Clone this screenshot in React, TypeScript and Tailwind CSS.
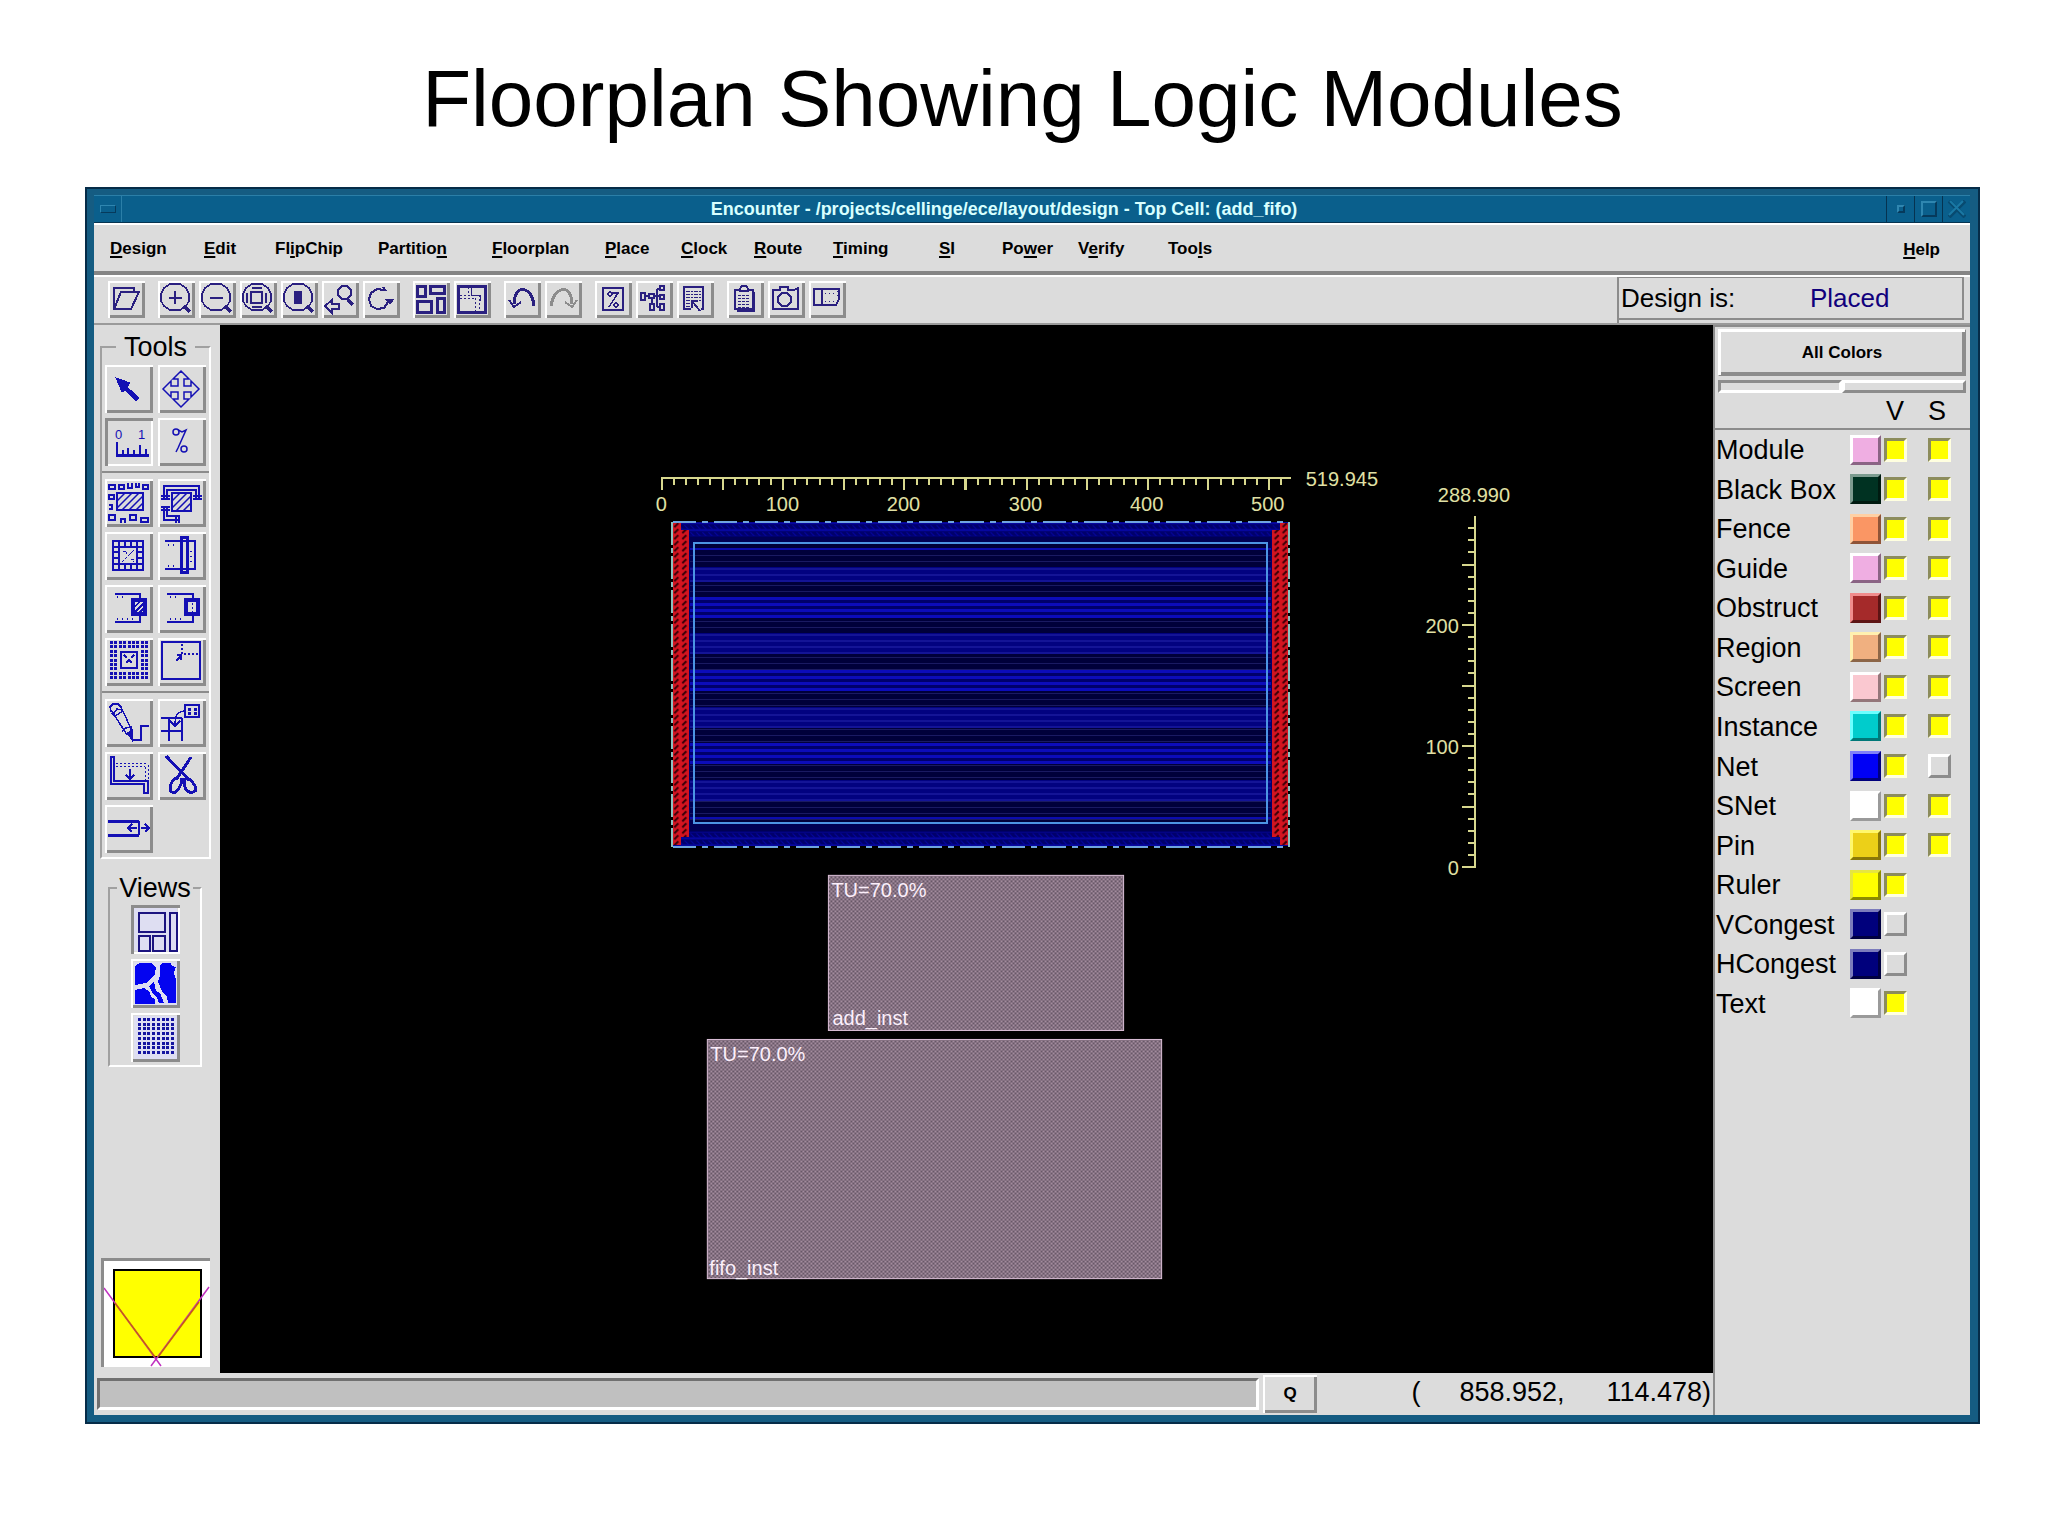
import { useState } from "react";
import type { ReactNode } from "react";

const raised =
  "bg-[#dcdcdc] shadow-[inset_2px_2px_0_#fff,inset_-3px_-3px_0_#8c8c8c]";
const sunken =
  "bg-[#dcdcdc] shadow-[inset_3px_3px_0_#8c8c8c,inset_-2px_-2px_0_#fff]";

const menus = [
  { before: "", key: "D", after: "esign", width: "w-[94px]" },
  { before: "", key: "E", after: "dit", width: "w-[71px]" },
  { before: "Fl", key: "i", after: "pChip", width: "w-[103px]" },
  { before: "Partitio", key: "n", after: "", width: "w-[114px]" },
  { before: "", key: "F", after: "loorplan", width: "w-[113px]" },
  { before: "", key: "P", after: "lace", width: "w-[76px]" },
  { before: "", key: "C", after: "lock", width: "w-[73px]" },
  { before: "", key: "R", after: "oute", width: "w-[79px]" },
  { before: "", key: "T", after: "iming", width: "w-[106px]" },
  { before: "", key: "S", after: "I", width: "w-[63px]" },
  { before: "Po", key: "w", after: "er", width: "w-[76px]" },
  { before: "V", key: "e", after: "rify", width: "w-[90px]" },
  { before: "Too", key: "l", after: "s", width: "w-[60px]" },
];

const layers = [
  { name: "Module", color: "bg-[#efaee2] border-t-[#fff] border-l-[#fff] border-r-[#8a6484] border-b-[#8a6484]", v: true, s: true },
  { name: "Black Box", color: "bg-[#003222] border-t-[#7d9c90] border-l-[#7d9c90] border-r-[#001a10] border-b-[#001a10]", v: true, s: true },
  { name: "Fence", color: "bg-[#fa9664] border-t-[#ffd0a4] border-l-[#ffd0a4] border-r-[#8f5438] border-b-[#8f5438]", v: true, s: true },
  { name: "Guide", color: "bg-[#efaee2] border-t-[#fff] border-l-[#fff] border-r-[#8a6484] border-b-[#8a6484]", v: true, s: true },
  { name: "Obstruct", color: "bg-[#a52a2a] border-t-[#f08c8c] border-l-[#f08c8c] border-r-[#5c1414] border-b-[#5c1414]", v: true, s: true },
  { name: "Region", color: "bg-[#f0b080] border-t-[#fff0b0] border-l-[#fff0b0] border-r-[#8c6648] border-b-[#8c6648]", v: true, s: true },
  { name: "Screen", color: "bg-[#fac8d0] border-t-[#fff] border-l-[#fff] border-r-[#94767a] border-b-[#94767a]", v: true, s: true },
  { name: "Instance", color: "bg-[#00cccc] border-t-[#6cffff] border-l-[#6cffff] border-r-[#007878] border-b-[#007878]", v: true, s: true },
  { name: "Net", color: "bg-[#0000f5] border-t-[#8080f8] border-l-[#8080f8] border-r-[#00007c] border-b-[#00007c]", v: true, s: false },
  { name: "SNet", color: "bg-[#fff] border-t-[#fff] border-l-[#fff] border-r-[#9a9a9a] border-b-[#9a9a9a]", v: true, s: true },
  { name: "Pin", color: "bg-[#ecd018] border-t-[#fff86c] border-l-[#fff86c] border-r-[#8a7808] border-b-[#8a7808]", v: true, s: true },
  { name: "Ruler", color: "bg-[#ffff00] border-t-[#e6e640] border-l-[#e6e640] border-r-[#8c8c00] border-b-[#8c8c00]", v: true, s: null },
  { name: "VCongest", color: "bg-[#00007c] border-t-[#7c7cbc] border-l-[#7c7cbc] border-r-[#000040] border-b-[#000040]", v: false, s: null },
  { name: "HCongest", color: "bg-[#00007c] border-t-[#7c7cbc] border-l-[#7c7cbc] border-r-[#000040] border-b-[#000040]", v: false, s: null },
  { name: "Text", color: "bg-[#fff] border-t-[#fff] border-l-[#fff] border-r-[#9a9a9a] border-b-[#9a9a9a]", v: true, s: null },
];

const range = (n: number) => Array.from({ length: n }, (_, i) => i);

/* ---------- toolbar icons, 37 x 37 ---------- */

const Lens = ({ children }: { children?: ReactNode }) => (
  <>
    <path d="M12 3H22L28 7L31 13V20L28 25L22 29H12L6 25L3 20V13L6 7Z" strokeWidth="1.5" />
    <path d="M26 25L32 31" strokeWidth="4" />
    {children}
  </>
);

const toolbarGroups: { name: string; gray?: boolean; icon: ReactNode }[][] = [
  [
    {
      name: "Open design",
      icon: <path d="M6 28V7H26V11M13 11H31L23 28H6Z" strokeWidth="2" />,
    },
  ],
  [
    { name: "Zoom in", icon: <Lens><path d="M11 17H24M17 10V23" /></Lens> },
    { name: "Zoom out", icon: <Lens><path d="M11 17H24" /></Lens> },
    {
      name: "Fit",
      icon: (
        <Lens>
          <rect x="11" y="11" width="11" height="11" strokeWidth="2" />
          <path d="M12 7H22M12 26H22M7 12V22M26 12V22" />
        </Lens>
      ),
    },
    {
      name: "Zoom selected",
      icon: <Lens><rect x="14" y="11" width="6" height="11" fill="currentColor" /></Lens>,
    },
    {
      name: "Previous view",
      icon: (
        <>
          <path d="M20 5H25L29 9V14L25 18H20L16 14V9Z" strokeWidth="1.5" />
          <path d="M26 19L31 24" strokeWidth="3" />
          <path d="M3 25L10 19V23H17V28H10V32Z" />
        </>
      ),
    },
    {
      name: "Redraw",
      icon: (
        <>
          <path d="M21 9L14 8L8 12L6 18L8 25L14 28L21 27L25 21" strokeWidth="2" />
          <path d="M22 18H31L27 23Z" fill="currentColor" strokeWidth="1" />
          <path d="M20 6L23 10" />
        </>
      ),
    },
  ],
  [
    {
      name: "Floorplan view",
      icon: (
        <g strokeWidth="3">
          <rect x="4" y="5" width="8" height="10" />
          <rect x="17" y="5" width="14" height="7" />
          <rect x="4" y="20" width="14" height="11" />
          <rect x="24" y="17" width="7" height="14" />
        </g>
      ),
    },
    {
      name: "Relative floorplan",
      icon: (
        <>
          <rect x="4" y="5" width="27" height="26" strokeWidth="3" />
          <path d="M14 6V14M6 14H26M6 17H22M21 17V30M25 14V30" strokeWidth="1" strokeDasharray="2 2" />
          <path d="M17 6V14H26V20" strokeWidth="1" />
        </>
      ),
    },
  ],
  [
    {
      name: "Undo",
      icon: (
        <>
          <path d="M30 25C29 12 22 7 16 9C12 11 10 15 10 23" strokeWidth="3" />
          <path d="M5 19L10 26L17 21" strokeWidth="2" />
        </>
      ),
    },
    {
      name: "Redo",
      gray: true,
      icon: (
        <>
          <path d="M6 25C8 12 15 7 21 9C25 11 27 15 27 23" strokeWidth="3" />
          <path d="M32 19L27 26L20 21" strokeWidth="2" />
        </>
      ),
    },
  ],
  [
    {
      name: "Density",
      icon: (
        <>
          <rect x="8" y="7" width="20" height="22" />
          <g strokeWidth="1.5">
            <circle cx="15" cy="13" r="2" />
            <circle cx="21" cy="24" r="2" />
            <path d="M17 12H23L14 26" />
          </g>
        </>
      ),
    },
    {
      name: "Hierarchy",
      icon: (
        <>
          <rect x="5" y="12" width="4" height="7" />
          <rect x="13" y="13" width="5" height="4" />
          <rect x="24" y="5" width="4" height="4" />
          <rect x="24" y="14" width="4" height="4" />
          <rect x="14" y="23" width="4" height="6" />
          <rect x="24" y="23" width="4" height="6" />
          <path d="M9 15H13M18 15H24M16 17V23M21 8V26M21 8H24M21 26H24" />
        </>
      ),
    },
    {
      name: "Report",
      icon: (
        <>
          <path d="M14 28H7V6H26V28H24" />
          <path d="M9 10H24M9 13H24M9 16H24M9 19H24M9 22H15M9 25H13" strokeWidth="1" strokeDasharray="4 1 2 1" />
          <path d="M15 20L23 30M15 20V27M15 20H21" />
        </>
      ),
    },
  ],
  [
    {
      name: "Summary",
      icon: (
        <>
          <path d="M8 9H12L15 5H19L22 9H26V28H8Z" />
          <path d="M12 10H22" />
          <path d="M27 11V30H10" strokeWidth="2" />
          <path d="M11 14H23M11 17H23M11 20H23M11 23H23M11 26H23" strokeWidth="1" strokeDasharray="3 1" />
        </>
      ),
    },
    {
      name: "Snapshot",
      icon: (
        <>
          <path d="M5 28V9H12V6H20V9H26L30 7V28Z" />
          <path d="M14 12H19L23 16V21L19 25H14L10 21V16Z" />
        </>
      ),
    },
    {
      name: "Plot",
      icon: (
        <>
          <path d="M5 8H30V18L27 24H5ZM13 8V24" />
          <path d="M16 12H28M16 20H27M28 10V18" strokeWidth="1" strokeDasharray="1 3" />
        </>
      ),
    },
  ],
];

/* ---------- palette icons, 48 x 48 ---------- */

const toolGroups: { name: string; pressed?: boolean; icon: ReactNode }[][] = [
  [
    {
      name: "Select",
      icon: <path d="M11 13L25 18L22 22L34 33L31 36L20 25L17 27Z" fill="currentColor" strokeWidth="1" />,
    },
    {
      name: "Move",
      icon: <path d="M23 6L31 14H26V21H33V16L41 24L33 32V27H26V34H31L23 42L15 34H20V27H13V32L5 24L13 16V21H20V14H15Z" strokeWidth="1.5" shapeRendering="auto" />,
    },
    {
      name: "Ruler",
      pressed: true,
      icon: (
        <>
          <path d="M12 24V36M18 32V36M23 30V36M29 32V36M35 27V36M41 31V36" />
          <path d="M11 37H44" strokeWidth="3" />
          <g fill="currentColor" stroke="none" fontSize="13">
            <text x="10" y="21">0</text>
            <text x="33" y="21">1</text>
          </g>
        </>
      ),
    },
    {
      name: "Density",
      icon: (
        <g strokeWidth="1.5" shapeRendering="auto">
          <circle cx="18" cy="14" r="3" />
          <circle cx="26" cy="31" r="3" />
          <path d="M20 12L24 14L28 12L20 30L18 34" />
        </g>
      ),
    },
  ],
  [
    {
      name: "Place pads",
      icon: (
        <>
          <rect x="12" y="14" width="26" height="17" />
          <path d="M12 22L20 14M12 29L27 14M17 31L34 14M24 31L38 17M31 31L38 24" strokeWidth="1.5" shapeRendering="auto" />
          <path d="M4 6H10V10H4ZM14 6H19V10H14ZM23 4V9H27V4M31 4V8H34V4M38 6H43V10H38ZM4 16H9V20H4ZM4 26H7V30H4M4 36H10V41H4ZM16 44V40H20V44M25 36H31V41H25ZM36 39H43V43H36Z" strokeWidth="1.5" />
        </>
      ),
    },
    {
      name: "Edge pads",
      icon: (
        <>
          <rect x="14" y="14" width="19" height="18" />
          <path d="M14 22L22 14M14 29L29 14M18 32L33 17M25 32L33 24" strokeWidth="1.5" shapeRendering="auto" />
          <path d="M6 20V7H41V20M9 20V11H38V20M3 17H12M35 17H44M3 20H12M35 20H44M6 27V41H21M9 27V37H21M3 28H12M3 31H12M18 36V44M21 36V44" strokeWidth="1.5" />
        </>
      ),
    },
    {
      name: "Core grid",
      icon: (
        <>
          <path d="M8 9H38V38H8Z" />
          <path d="M14 9V38M32 9V38M8 15H38M8 32H38M20 9V15M26 9V15M20 32V38M26 32V38M8 20H14M8 26H14M32 20H38M32 26H38" strokeWidth="1.5" />
          <path d="M17 30L29 18M18 19H21V22M26 27H28V30" strokeWidth="1" strokeDasharray="3 1" />
        </>
      ),
    },
    {
      name: "Cut core",
      icon: (
        <>
          <path d="M7 9H37V37H7" strokeWidth="1.5" />
          <rect x="23" y="5" width="6" height="35" strokeWidth="3" />
          <path d="M10 13H18M10 34H18M33 19V30" strokeDasharray="1 4" />
        </>
      ),
    },
    {
      name: "Block halo",
      icon: (
        <>
          <path d="M10 9H35V13M35 31V37H10" />
          <path d="M12 12H20M12 34H30" strokeDasharray="1 4" />
          <rect x="28" y="15" width="12" height="14" strokeWidth="4" />
          <path d="M30 21L35 17M30 27L38 19M34 28L38 24" strokeWidth="1.5" />
        </>
      ),
    },
    {
      name: "Block cut",
      icon: (
        <>
          <path d="M9 9H35V13M35 31V37H9" />
          <path d="M12 12H20M12 34H24" strokeDasharray="1 4" />
          <rect x="28" y="15" width="12" height="14" strokeWidth="4" />
          <path d="M34 18V28" strokeWidth="1" strokeDasharray="2 2" />
        </>
      ),
    },
    {
      name: "Power ring",
      icon: (
        <>
          {range(81).map((n) => {
            const col = n % 9;
            const row = Math.floor(n / 9);
            if (col > 1 && col < 7 && row > 1 && row < 7) return null;
            return (
              <rect
                key={n}
                x={5 + Math.round(col * 4.4)}
                y={3 + Math.round(row * 4.4)}
                width="3"
                height="3"
                fill="currentColor"
                stroke="none"
              />
            );
          })}
          <rect x="16" y="14" width="16" height="16" />
          <path d="M19 17L29 27M29 17L19 27" strokeWidth="1.5" strokeDasharray="4 3" />
        </>
      ),
    },
    {
      name: "Origin",
      icon: (
        <>
          <rect x="4" y="4" width="38" height="37" />
          <path d="M24 6V16H40" strokeDasharray="2 2" />
          <path d="M18 23L23 18M19 17H23V22" />
        </>
      ),
    },
  ],
  [
    {
      name: "Edit wire",
      icon: (
        <>
          <path d="M6 12L5 8L8 5H13L16 8L17 11L12 10L9 14ZM7 14L10 17L18 12M10 17L22 36M18 12L26 30" strokeWidth="1.5" />
          <path d="M17 32L21 29L26 28V36" strokeWidth="1.5" />
          <path d="M22 34L27 31V41Z" fill="currentColor" strokeWidth="1" />
          <path d="M27 41H36V27H44" />
        </>
      ),
    },
    {
      name: "Add via",
      icon: (
        <>
          <rect x="27" y="6" width="14" height="12" />
          <path d="M30 10H33M36 10H39M30 14H33M36 14H39" strokeWidth="3" />
          <path d="M26 12C19 13 17 16 17 27M12 22L17 27L22 22M3 19H24M3 32H24M11 19V42M24 19V42" strokeWidth="1.5" />
        </>
      ),
    },
    {
      name: "Stretch wire",
      icon: (
        <>
          <path d="M6 5H9V29H43V41H39V32H6Z" />
          <path d="M11 11H43M11 14H40M43 13V28M40 15V28" strokeWidth="1" strokeDasharray="2 2" />
          <path d="M25 17V27M21 23L25 27L29 23" />
        </>
      ),
    },
    {
      name: "Cut wire",
      icon: (
        <>
          <path d="M8 4L31 28M33 5L18 28" strokeWidth="3" />
          <path d="M21 24L15 28L12 34V39L16 41L20 38L23 32V26M27 26L33 28L37 34V39L33 41L28 38L26 32V26" strokeWidth="3" />
        </>
      ),
    },
    {
      name: "Extend wire",
      icon: (
        <>
          <path d="M3 16H34M3 30H34" strokeWidth="3" />
          <path d="M34 16V30M23 23H32M27 19L23 23L27 27M36 23H44M40 19L44 23L40 27" />
        </>
      ),
    },
  ],
];

const views: { name: string; pressed?: boolean; icon: ReactNode }[] = [
  {
    name: "Floorplan view",
    pressed: true,
    icon: (
      <path d="M8 8H34V27H8ZM39 8H46V46H39ZM8 31H19V46H8ZM22 31H34V46H22Z" strokeWidth="1.5" className="text-[#1c1480]" />
    ),
  },
  {
    name: "Amoeba view",
    icon: (
      <g fill="#0404f0" stroke="none">
        <path d="M4 7L9 4H20L25 8L24 15L20 20L15 24L4 26Z" />
        <path d="M29 7L31 4H40L41 7L45 8L43 14L45 20V44H37L36 38L31 32L27 23L29 16Z" />
        <path d="M4 31L13 29L19 33L20 38L24 40V45H4Z" />
        <path d="M18 27L23 23L25 32L29 34L33 44H28L26 38L22 35Z" />
      </g>
    ),
  },
  {
    name: "Physical view",
    icon: (
      <>
        {range(64).map((n) => {
          const col = n % 8;
          const row = Math.floor(n / 8);
          return (
            <rect
              key={n}
              x={7 + Math.round(col * 4.5) + (col > 3 ? 1 : 0)}
              y={5 + Math.round(row * 4.5) + (row > 3 ? 1 : 0)}
              width="3"
              height="3"
              fill="#1414a0"
              stroke="none"
            />
          );
        })}
      </>
    ),
  },
];

const Icon = ({ size, children }: { size: number; children: ReactNode }) => (
  <svg
    viewBox={`0 0 ${size} ${size}`}
    fill="none"
    stroke="currentColor"
    strokeWidth="2"
    shapeRendering="crispEdges"
    className="block size-full"
    aria-hidden="true"
  >
    {children}
  </svg>
);

const TitleBar = () => (
  <header className="flex h-7 items-stretch border-y border-t-[#2b7fa8] border-b-[#063350] bg-[#0a5f8c] text-[#d8ffff]">
    <button aria-label="Window menu" className="flex w-7 items-center justify-center border-r border-[#2b7fa8]">
      <span className="h-2 w-4 border border-t-[#2f86b0] border-l-[#2f86b0] border-r-[#063a5c] border-b-[#063a5c]" />
    </button>
    <h2 className="flex-1 text-center text-[18px] leading-[26px] font-bold whitespace-nowrap">
      Encounter - /projects/cellinge/ece/layout/design - Top Cell: (add_fifo)
    </h2>
    <button aria-label="Minimize" className="flex w-7 items-center justify-center border-l border-[#063350]">
      <span className="size-2 border-2 border-t-[#2f86b0] border-l-[#2f86b0] border-r-[#063a5c] border-b-[#063a5c]" />
    </button>
    <button aria-label="Maximize" className="flex w-7 items-center justify-center border-l border-[#063350]">
      <span className="size-4 border-2 border-t-[#2f86b0] border-l-[#2f86b0] border-r-[#063a5c] border-b-[#063a5c]" />
    </button>
    <button aria-label="Close" className="flex w-7 items-center justify-center border-l border-[#063350]">
      <svg viewBox="0 0 18 18" className="size-[18px]" fill="none" stroke="#084a70" strokeWidth="2">
        <path d="M1 1L17 17M17 1L1 17" strokeWidth="4" />
        <path d="M2 1L16 15M15 1L1 15" stroke="#1a78a4" strokeWidth="2" />
      </svg>
    </button>
  </header>
);

const MenuBar = () => (
  <nav className="flex h-[52px] border-t-2 border-b-4 border-t-white border-b-[#858585] pt-[2px] pl-4 text-[17px] leading-[40px] font-bold">
    {menus.map((menu) => (
      <button key={menu.before + menu.key} className={`${menu.width} flex-none text-left whitespace-nowrap`}>
        {menu.before}
        <span className="underline underline-offset-2 decoration-2">{menu.key}</span>
        {menu.after}
      </button>
    ))}
    <button className="mr-[30px] ml-auto pt-[2px]">
      <span className="underline underline-offset-2 decoration-2">H</span>elp
    </button>
  </nav>
);

const Toolbar = () => (
  <div className="flex h-[50px] border-t-2 border-b-2 border-t-white border-b-[#9a9a9a]">
    <div className="flex flex-1 items-start gap-[13px] pt-1 pl-[14px]">
      {toolbarGroups.map((group, index) => (
        <div key={index} className="flex gap-1">
          {group.map((tool) => (
            <button
              key={tool.name}
              aria-label={tool.name}
              className={`size-[37px] ${raised} ${tool.gray ? "text-[#8c8c8c]" : "text-[#2a2080]"}`}
            >
              <Icon size={37}>{tool.icon}</Icon>
            </button>
          ))}
        </div>
      ))}
    </div>
    <div className="flex w-[353px] border-l-2 border-[#8c8c8c] pr-[6px] pb-[3px]">
      <div className="flex flex-1 items-center border-t border-r-2 border-b-2 border-[#8c8c8c] pl-[2px] text-[26px] leading-[40px]">
        <span className="w-[189px]">Design is:</span>
        <output className="text-[#10007c]">Placed</output>
      </div>
    </div>
  </div>
);

const Palette = () => (
  <aside className="flex w-[126px] flex-none flex-col">
    <fieldset className="mt-2 mr-[9px] ml-[6px] border-2 border-[#a0a0a0] border-r-white border-b-white pb-1">
      <legend className="mx-auto px-2 text-[27px] leading-[28px]">Tools</legend>
      {toolGroups.map((group, index) => (
        <div
          key={index}
          className={`grid grid-cols-[48px_48px] gap-[5px] pl-[3px] ${
            index === 0 ? "pt-[4px]" : "mt-[5px] border-t-2 border-[#8c8c8c] pt-[6px]"
          }`}
        >
          {group.map((tool) => (
            <button
              key={tool.name}
              aria-label={tool.name}
              aria-pressed={!!tool.pressed}
              className={`size-12 text-[#1410b4] ${tool.pressed ? sunken : raised}`}
            >
              <Icon size={48}>{tool.icon}</Icon>
            </button>
          ))}
        </div>
      ))}
    </fieldset>
    <fieldset className="mt-[15px] mr-[18px] ml-[14px] flex flex-col items-center border-2 border-[#a0a0a0] border-r-white border-b-white pb-[3px]">
      <legend className="mx-auto px-[2px] text-[27px] leading-[28px]">Views</legend>
      <div className="flex flex-col gap-[5px] pt-[3px]">
        {views.map((view) => (
          <button
            key={view.name}
            aria-label={view.name}
            aria-pressed={!!view.pressed}
            className={`size-[49px] ${view.pressed ? sunken : raised}`}
          >
            <Icon size={49}>
              <rect x="3" y="3" width="43" height="43" fill="#dedef2" stroke="none" />
              {view.icon}
            </Icon>
          </button>
        ))}
      </div>
    </fieldset>
    <div className="mt-auto mr-[10px] mb-[6px] ml-[7px] border-t-3 border-l-3 border-[#8c8c8c] bg-white">
      <svg viewBox="0 0 106 106" className="block w-full" fill="none">
        <rect x="10" y="9" width="87" height="87" fill="#ffff00" stroke="#000" strokeWidth="2" />
        <path d="M0 27L57 105M105 26L47 105" stroke="#c030c0" strokeWidth="1.5" />
        <path d="M11 42L51 96M95 41L54 96" stroke="#c86010" strokeWidth="1.5" />
      </svg>
    </div>
  </aside>
);

const Chip = () => {
  const solid = [567, 633, 707, 780];
  const striped = [597, 670, 743];
  return (
    <g shapeRendering="crispEdges">
      <rect x="673" y="522" width="614" height="324" fill="#00006c" />
      <rect x="673" y="522" width="614" height="14" fill="url(#weave)" />
      <rect x="673" y="832" width="614" height="14" fill="url(#weave)" />
      <rect x="690" y="537" width="580" height="294" fill="#000054" />
      <rect x="695" y="544" width="571" height="280" fill="#00003a" />
      {range(46).map((n) => (
        <rect key={n} x="690" y={549 + n * 6} width="580" height="1" fill="#1a1a62" />
      ))}
      {solid.map((y) => (
        <g key={y}>
          <rect x="690" y={y} width="580" height={y === 567 ? 15 : 21} fill="#020280" />
          {range(y === 567 ? 3 : 4).map((n) => (
            <rect key={n} x="690" y={y + 1 + n * 6} width="580" height="2" fill="#141496" />
          ))}
        </g>
      ))}
      {striped.map((y) => (
        <g key={y}>
          <rect x="690" y={y} width="580" height="21" fill="#00006a" />
          {range(4).map((n) => (
            <rect key={n} x="690" y={y + n * 6} width="580" height="3" fill="#0c0cba" />
          ))}
        </g>
      ))}
      <rect x="690" y="548" width="580" height="2" fill="#0c0cae" />
      <rect x="690" y="817" width="580" height="2" fill="#0c0cae" />
      <rect x="694" y="543" width="572" height="280" fill="none" stroke="#4c94e4" strokeWidth="2" />
      <path d="M673 522H1288M673 847H1288" stroke="#6ea4e0" strokeWidth="2" strokeDasharray="23 6 6 6" />
      <path d="M672 522V847M1288 522V847" stroke="#8cc0c0" strokeWidth="2" strokeDasharray="23 3 5 3" />
      <rect x="673" y="523" width="8" height="322" fill="url(#metal)" />
      <rect x="681" y="530" width="8" height="307" fill="url(#metal)" />
      <rect x="1271" y="530" width="8" height="307" fill="url(#metal)" />
      <rect x="1279" y="523" width="8" height="322" fill="url(#metal)" />
    </g>
  );
};

const Rulers = () => (
  <>
    <g stroke="#d8d88e" strokeWidth="2" shapeRendering="crispEdges">
      <path d="M661 478H1290M1474 516V868" />
      {range(52).map((n) => {
        const x = Math.round(662 + n * 12.12);
        return <path key={n} d={`M${x} 478V${n % 5 ? 485 : 490}`} />;
      })}
      {range(29).map((n) => {
        const y = Math.round(867 - n * 12.1);
        return <path key={n} d={`M${n % 5 ? 1467 : 1461} ${y}H1474`} />;
      })}
    </g>
    <g fill="#e0e0a4" fontSize="20">
      <g textAnchor="middle">
        {[0, 100, 200, 300, 400, 500].map((n) => (
          <text key={n} x={661 + Math.round(n * 1.212)} y="511">{n}</text>
        ))}
      </g>
      <g textAnchor="end">
        <text x="1458" y="633">200</text>
        <text x="1458" y="754">100</text>
        <text x="1458" y="875">0</text>
      </g>
      <text x="1305" y="486">519.945</text>
      <text x="1437" y="502">288.990</text>
    </g>
  </>
);

const LayoutCanvas = () => (
  <main className="min-w-0 flex-1 bg-black">
    <svg viewBox="220 325 1492 1047" className="block w-full">
      <defs>
        <pattern id="dither" width="4" height="4" patternUnits="userSpaceOnUse">
          <rect width="4" height="4" fill="#685868" />
          <rect width="2" height="2" fill="#a48c9e" />
          <rect x="2" y="2" width="2" height="2" fill="#a48c9e" />
        </pattern>
        <pattern id="metal" width="8" height="6" patternUnits="userSpaceOnUse">
          <rect width="8" height="6" fill="#d41420" />
          <path d="M2 5L6 1" stroke="#3c0008" strokeWidth="2" />
        </pattern>
        <pattern id="weave" width="6" height="7" patternUnits="userSpaceOnUse">
          <rect width="6" height="7" fill="#00006c" />
          <rect width="6" height="2" y="4" fill="#0808a4" />
          <path d="M0 0L6 6" stroke="#0404a0" strokeWidth="1" />
        </pattern>
      </defs>
      <Rulers />
      <Chip />
      <g fill="url(#dither)" stroke="#dcc0d8" strokeWidth="1">
        <rect x="828" y="875" width="295" height="155" />
        <rect x="707" y="1039" width="454" height="239" />
      </g>
      <g fill="#fbeffb" fontSize="20">
        <text x="831" y="897">TU=70.0%</text>
        <text x="832" y="1025">add_inst</text>
        <text x="710" y="1061">TU=70.0%</text>
        <text x="709" y="1274">fifo_inst</text>
      </g>
    </svg>
  </main>
);

const StatusBar = () => (
  <footer className="flex h-[42px] items-start">
    <div className="mt-[5px] ml-[3px] h-8 flex-1 border-[3px] border-[#707070] border-r-white border-b-white bg-[#c0c0c0]" />
    <button className={`mt-[2px] ml-1 h-[38px] w-[54px] flex-none text-[17px] font-bold ${raised}`}>Q</button>
    <output className="flex w-[396px] flex-none justify-end pr-[2px] text-[27px] leading-[38px] whitespace-pre">
      <span className="w-12">(</span>
      <span className="w-[147px]">858.952,</span>
      <span>114.478)</span>
    </output>
  </footer>
);

const LayerToggle = ({ id, on }: { id: string; on: boolean }) => {
  const [checked, setChecked] = useState(on);
  return (
    <input
      id={id}
      type="checkbox"
      aria-label={id}
      checked={checked}
      onChange={() => setChecked(!checked)}
      className="block h-6 w-[23px] appearance-none border-3 border-t-white border-l-white border-r-[#8c8c8c] border-b-[#8c8c8c] bg-[#dcdcdc] checked:border-t-[#8c8c5c] checked:border-l-[#8c8c5c] checked:border-r-[#ffffe0] checked:border-b-[#ffffe0] checked:bg-[#ffff00]"
    />
  );
};

const ColorPanel = () => (
  <aside className="flex w-[257px] flex-none flex-col border-l-2 border-[#8c8c8c]">
    <div className="border-t-2 border-[#8c8c8c] pt-[2px] pr-1 pl-[3px]">
      <button className="block h-[47px] w-full border border-[#8c8c8c] border-t-white border-l-white text-[17px] font-bold">
        <span className={`flex size-full items-center justify-center ${raised}`}>All Colors</span>
      </button>
      <div className="mt-1 flex h-[13px]">
        <div className="w-1/2 border-3 border-[#8c8c8c] border-r-white border-b-white" />
        <div className="w-1/2 border-3 border-white border-r-[#8c8c8c] border-b-[#8c8c8c]" />
      </div>
    </div>
    <div className="grid h-[37px] grid-cols-[171px_42px_1fr] border-b-2 border-[#8c8c8c] text-[27px] leading-[36px]">
      <span />
      <span>V</span>
      <span>S</span>
    </div>
    <div className="flex h-[593px] flex-col">
      {layers.map((layer) => (
        <div key={layer.name} className="grid flex-1 grid-cols-[135px_34px_44px_1fr] items-center">
          <label htmlFor={`${layer.name} visible`} className="pt-px pl-px text-[27px] leading-[36px] whitespace-nowrap">
            {layer.name}
          </label>
          <button aria-label={`${layer.name} color`} className={`h-[30px] w-[31px] border-3 ${layer.color}`} />
          <LayerToggle id={`${layer.name} visible`} on={layer.v} />
          {layer.s !== null && <LayerToggle id={`${layer.name} selectable`} on={layer.s} />}
        </div>
      ))}
    </div>
  </aside>
);

const App = () => {
  return (
    <div className="min-h-screen bg-white pr-[68px] pb-28 pl-[85px] font-['Liberation_Sans',Arial,sans-serif] text-black">
      <h1 className="pt-[54px] pr-5 pb-[43px] text-center text-[80px] leading-[90px]">
        Floorplan Showing Logic Modules
      </h1>
      <div className="border-2 border-[#062c48] bg-[#155c82] pt-[6px] pr-2 pb-[7px] pl-[7px]">
        <TitleBar />
        <div className="bg-[#dcdcdc]">
          <MenuBar />
          <Toolbar />
          <div className="flex">
            <div className="min-w-0 flex-1">
              <div className="flex">
                <Palette />
                <LayoutCanvas />
              </div>
              <StatusBar />
            </div>
            <ColorPanel />
          </div>
        </div>
      </div>
    </div>
  );
};

export default App;
